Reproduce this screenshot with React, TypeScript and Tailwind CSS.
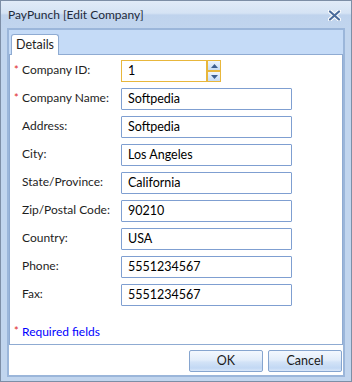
const fields = [
  { label: 'Company ID:', value: '1', required: true, spin: true },
  { label: 'Company Name:', value: 'Softpedia', required: true },
  { label: 'Address:', value: 'Softpedia' },
  { label: 'City:', value: 'Los Angeles' },
  { label: 'State/Province:', value: 'California' },
  { label: 'Zip/Postal Code:', value: '90210' },
  { label: 'Country:', value: 'USA' },
  { label: 'Phone:', value: '5551234567' },
  { label: 'Fax:', value: '5551234567' },
];

function Spinner() {
  return (
    <div className="flex flex-col w-[14px] h-[22px]">
      {[0, 1].map((i) => (
        <div
          key={i}
          className="flex-1 border border-[#e8b73c] bg-[linear-gradient(to_bottom,#eef5fd,#c7dcf6)] flex items-center justify-center"
        >
          <svg width="7" height="4" viewBox="0 0 7 4">
            {i === 0 ? (
              <path d="M0 4 L3.5 0 L7 4 Z" fill="#3d5f8f" />
            ) : (
              <path d="M0 0 L3.5 4 L7 0 Z" fill="#3d5f8f" />
            )}
          </svg>
        </div>
      ))}
    </div>
  );
}

function Btn({ label }: { label: string }) {
  return (
    <button className="w-[74px] h-[22px] border border-[#86a5cf] rounded-[2px] bg-[linear-gradient(to_bottom,#f3f8fe_0%,#e2edfa_45%,#d3e3f7_55%,#c2d8f4_85%,#d9e7f9_100%)] text-[12.5px] text-[#1a1a1a] leading-none">
      {label}
    </button>
  );
}

export default function App() {
  return (
    <div className="w-[352px] h-[382px] font-['Lato',sans-serif] text-[12px] text-[#1e1e1e] bg-[#c1d5ee] border border-[#7d8ea6] flex flex-col overflow-hidden">
      {/* Title bar */}
      <div className="h-[27px] shrink-0 flex items-center justify-between pl-[7px] pr-[10px] bg-[linear-gradient(to_bottom,#e1ebf8_0%,#d5e3f4_45%,#bfd3ed_52%,#c1d5ee_100%)]">
        <span className="text-[12px] text-[#1e2a3a] leading-none">PayPunch [Edit Company]</span>
        <svg width="13" height="11" viewBox="0 0 13 11" className="mt-[1px]">
          <path d="M2 1.5 L11 9.5 M11 1.5 L2 9.5" stroke="#ffffff" strokeWidth="4.2" strokeLinecap="round" />
          <path d="M2 1.5 L11 9.5 M11 1.5 L2 9.5" stroke="#4b6c9c" strokeWidth="2.2" strokeLinecap="round" />
        </svg>
      </div>

      {/* Client */}
      <div className="flex-1 mx-[6px] mb-[4px] border-2 border-[#9bb6da] flex flex-col bg-white">
        {/* Tab strip */}
        <div className="h-[24px] shrink-0 bg-[#c5dbf7] flex items-end pl-[2px]">
          <div className="h-[21px] w-[48px] -mb-px relative z-10 bg-white border border-b-0 border-[#8fabd2] rounded-t-[3px] flex items-center justify-center text-[12.5px]">
            Details
          </div>
        </div>

        {/* Panel */}
        <div className="h-[291px] shrink-0 border border-[#8fabd2] bg-white pt-[5px] pl-[4px] flex flex-col">
          <div className="flex flex-col gap-[6px]">
            {fields.map((f) => (
              <div key={f.label} className="flex items-center h-[22px]">
                <span className="w-[8px] text-[#e0262a] text-[11px] leading-none -mt-[4px]">{f.required ? '*' : ''}</span>
                <span className="w-[99px] leading-none -mt-[3px]">{f.label}</span>
                {f.spin ? (
                  <div className="flex">
                    <div className="w-[86px] h-[22px] border border-[#e8b73c] flex items-center pl-[6px] text-[12.5px] text-black">
                      {f.value}
                    </div>
                    <Spinner />
                  </div>
                ) : (
                  <div className="w-[171px] h-[22px] border border-[#7f9fd1] rounded-[1px] flex items-center pl-[6px] text-[12.5px] text-black">
                    {f.value}
                  </div>
                )}
              </div>
            ))}
          </div>
          <div className="mt-[17px] flex items-center">
            <span className="w-[8px] text-[#e0262a] text-[11px] leading-none -mt-[4px]">*</span>
            <span className="text-[#0000ff]">Required fields</span>
          </div>
        </div>

        {/* Buttons */}
        <div className="flex-1 flex justify-end items-start gap-[5px] pt-[5px] pr-[1px]">
          <Btn label="OK" />
          <Btn label="Cancel" />
        </div>
      </div>
    </div>
  );
}
